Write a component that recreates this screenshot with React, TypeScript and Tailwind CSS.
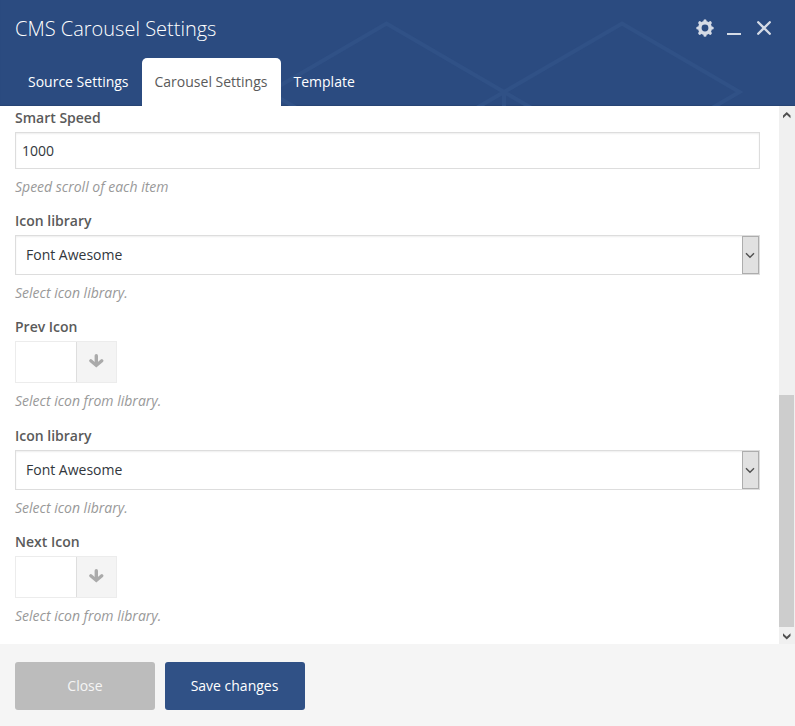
import React from "react";

function HeaderPattern() {
  return (
    <svg className="pointer-events-none absolute left-0 top-0" width="795" height="106" fill="none" stroke="#305186" strokeWidth="4">
      <path d="M504 92 L386.5 23.5 L269 92 L386.5 160.500 L504 92 L622 23.500 L739.500 92 L622 160.500 L504 92 V110" />
    </svg>
  );
}

function SelectChevron() {
  return (
    <svg className="-ml-px" width="10" height="7" viewBox="0 0 10 7" fill="none" stroke="#505050" strokeWidth="1.400">
      <path d="M1 1.300 L5 5.300 L9 1.300" />
    </svg>
  );
}

function ScrollArrow({ up = false }: { up?: boolean }) {
  return (
    <svg width="8" height="7" viewBox="0 0 8 7" fill="#505050">
      <path d={up ? "M3.750 0 L7.500 3.500 V6.300 L3.750 2.700 L0 6.300 V3.500 Z" : "M3.750 6.500 L7.500 3 V0.200 L3.750 3.800 L0 0.200 V3 Z"} />
    </svg>
  );
}

function Field({ label, hint, className = "mb-4", children }: { label: string; hint: string; className?: string; children: React.ReactNode }) {
  return (
    <div className={className}>
      <div className="mb-[5px] h-[18px] font-semibold leading-[18px] text-[#5a5a5a]">{label}</div>
      {children}
      <div className="mt-[9px] h-[18px] italic leading-[18px] text-[#999999]">{hint}</div>
    </div>
  );
}

function Select() {
  return (
    <div className="flex h-10 w-[745px] justify-between border border-[#dddddd] bg-white shadow-[inset_0_1px_2px_rgba(0,0,0,0.07)]">
      <span className="pl-[10px] leading-[38px] text-[#32373c]">Font Awesome</span>
      <span className="flex w-[17px] items-center justify-center border border-[#adadad] bg-[#e1e1e1]">
        <SelectChevron />
      </span>
    </div>
  );
}

function IconPicker() {
  return (
    <div className="flex h-[42px] w-[102px] border border-[#ececec] bg-white">
      <span className="w-[60px]" />
      <span className="flex flex-1 border-l border-[#dedede] bg-[#f4f4f4] pl-[11px] pt-3">
        <svg width="16" height="14" viewBox="0 0 16 14" fill="none" stroke="#aaaaaa" strokeLinecap="round">
          <path d="M8.300 1.700 V10" strokeWidth="3.400" />
          <path d="M2.800 6.700 L8.300 11.500 L13.800 6.700" strokeWidth="3.200" />
        </svg>
      </span>
    </div>
  );
}

export default function App() {
  return (
    <div className="flex h-[726px] w-[795px] flex-col overflow-hidden bg-white font-['Open_Sans',sans-serif] text-sm">
      <header className="relative flex h-[106px] shrink-0 flex-col justify-between bg-[#2b4b80] shadow-[inset_0_-1px_1px_rgba(0,0,0,0.1)]">
        <HeaderPattern />
        <div className="relative flex h-[56px] items-center justify-between pl-[15px] pr-6">
          <h1 className="pt-[2px] text-[20px] font-light text-white">CMS Carousel Settings</h1>
          <div className="flex items-center text-[#d5dbe6]">
            <svg width="18" height="18" viewBox="0 0 18 18" fill="currentColor">
              <circle cx="9" cy="9" r="5.200" fill="none" stroke="currentColor" strokeWidth="3.600" />
              <path
                d="M9 1.800V2.500M9 15.500V16.200M1.800 9H2.500M15.500 9H16.200M3.800 3.800L4.300 4.300M13.700 13.700L14.200 14.200M14.200 3.800L13.700 4.300M4.300 13.700L3.800 14.200"
                stroke="currentColor"
                strokeWidth="3.200"
                strokeLinecap="round"
              />
            </svg>
            <span className="ml-[13px] mt-3 h-[2px] w-[14px] bg-[#d5dbe6]" />
            <svg className="ml-4" width="14" height="14" viewBox="0 0 14 14" stroke="currentColor" strokeWidth="2.300" strokeLinecap="round">
              <path d="M1.200 1.200 L12.800 12.800 M12.800 1.200 L1.200 12.800" />
            </svg>
          </div>
        </div>
        <nav className="relative flex h-12 pl-[15px] leading-[48px] text-white">
          <span className="w-[127px] pl-[13px]">Source Settings</span>
          <span className="w-[139px] rounded-t-[5px] bg-white pr-px text-center text-[#5a5a5a]">Carousel Settings</span>
          <span className="pl-[12.500px]">Template</span>
        </nav>
      </header>
      <main className="flex h-[538px] shrink-0 justify-between">
        <div className="pl-[15px] pt-[3px]">
          <Field label="Smart Speed" hint="Speed scroll of each item">
            <div className="h-[37px] w-[745px] border border-[#dddddd] pl-[6px] leading-[35px] text-[#32373c] shadow-[inset_0_1px_2px_rgba(0,0,0,0.07)]">1000</div>
          </Field>
          <Field label="Icon library" hint="Select icon library."><Select /></Field>
          <Field label="Prev Icon" hint="Select icon from library." className="mb-[17px]"><IconPicker /></Field>
          <Field label="Icon library" hint="Select icon library."><Select /></Field>
          <Field label="Next Icon" hint="Select icon from library."><IconPicker /></Field>
        </div>
        <div className="flex w-4 flex-col bg-[#f0f0f0]">
          <span className="flex h-[17px] pl-1 pt-[6px]"><ScrollArrow up /></span>
          <span className="mt-[272px] h-[232px] w-[15px] bg-[#cdcdcd]" />
          <span className="flex h-[17px] pl-1 pt-[6px]"><ScrollArrow /></span>
        </div>
      </main>
      <footer className="flex flex-1 gap-[10px] bg-[#f5f5f5] pl-[15px] pt-[18px] text-center leading-[48px] text-white">
        <button className="h-12 w-[140px] rounded-[3px] bg-[#bcbcbc] text-[#f5f5f5]">Close</button>
        <button className="h-12 w-[140px] rounded-[3px] bg-[#305186] pr-px">Save changes</button>
      </footer>
    </div>
  );
}
